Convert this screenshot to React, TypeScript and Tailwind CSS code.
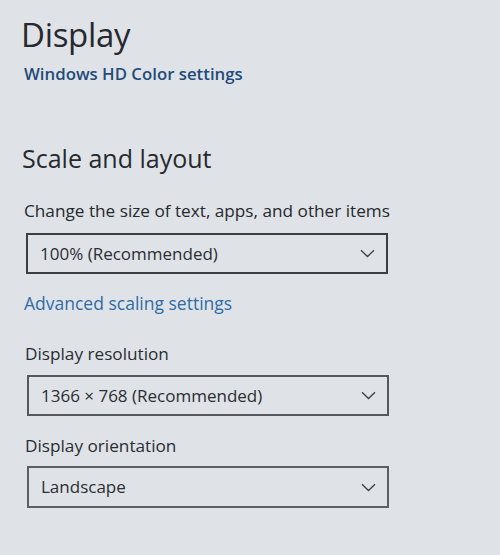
import React from "react";

function Chevron() {
  return (
    <svg width="15" height="9" viewBox="0 0 15 9" className="shrink-0">
      <path d="M1 1.2 L7.5 7.5 L14 1.2" fill="none" stroke="#3a3f45" strokeWidth="1.3" />
    </svg>
  );
}

function Select({ value, border, h }: { value: string; border: string; h: string }) {
  return (
    <div className={`w-[362px] ${h} border-2 ${border} flex items-center justify-between pl-[12px] pr-[11px]`}>
      <span className="text-[17px] text-[#2a2d31]">{value}</span>
      <Chevron />
    </div>
  );
}

export default function App() {
  return (
    <div
      className="w-[500px] h-[555px] bg-[#dfe3e8] overflow-hidden pl-[21px] pt-[11px]"
      style={{ fontFamily: '"Open Sans", "Noto Sans", sans-serif' }}
    >
      <h1 className="text-[33px] leading-[48px] text-[#26292d] tracking-[-0.3px]">Display</h1>
      <a className="block mt-[4px] ml-[3px] text-[16.8px] leading-[22px] text-[#1f4b79] font-semibold">
        Windows HD Color settings
      </a>

      <h2 className="mt-[57px] ml-[1px] text-[25px] leading-[32px] text-[#26292d]">Scale and layout</h2>

      <p className="mt-[25px] ml-[3px] text-[17.2px] leading-[24px] text-[#26292d]">
        Change the size of text, apps, and other items
      </p>
      <div className="mt-[10px] ml-[5px]">
        <Select value="100% (Recommended)" border="border-[#3b3f44]" h="h-[41px]" />
      </div>

      <a className="block mt-[17px] ml-[3px] text-[17.5px] leading-[24px] text-[#2f6ca5]">
        Advanced scaling settings
      </a>

      <p className="mt-[27px] ml-[4px] text-[17.2px] leading-[24px] text-[#2a2d31]">Display resolution</p>
      <div className="mt-[9px] ml-[6px]">
        <Select value="1366 × 768 (Recommended)" border="border-[#55595e]" h="h-[41px]" />
      </div>

      <p className="mt-[18px] ml-[4px] text-[17.2px] leading-[24px] text-[#2a2d31]">Display orientation</p>
      <div className="mt-[8px] ml-[6px]">
        <Select value="Landscape" border="border-[#5b5f64]" h="h-[42px]" />
      </div>
    </div>
  );
}
